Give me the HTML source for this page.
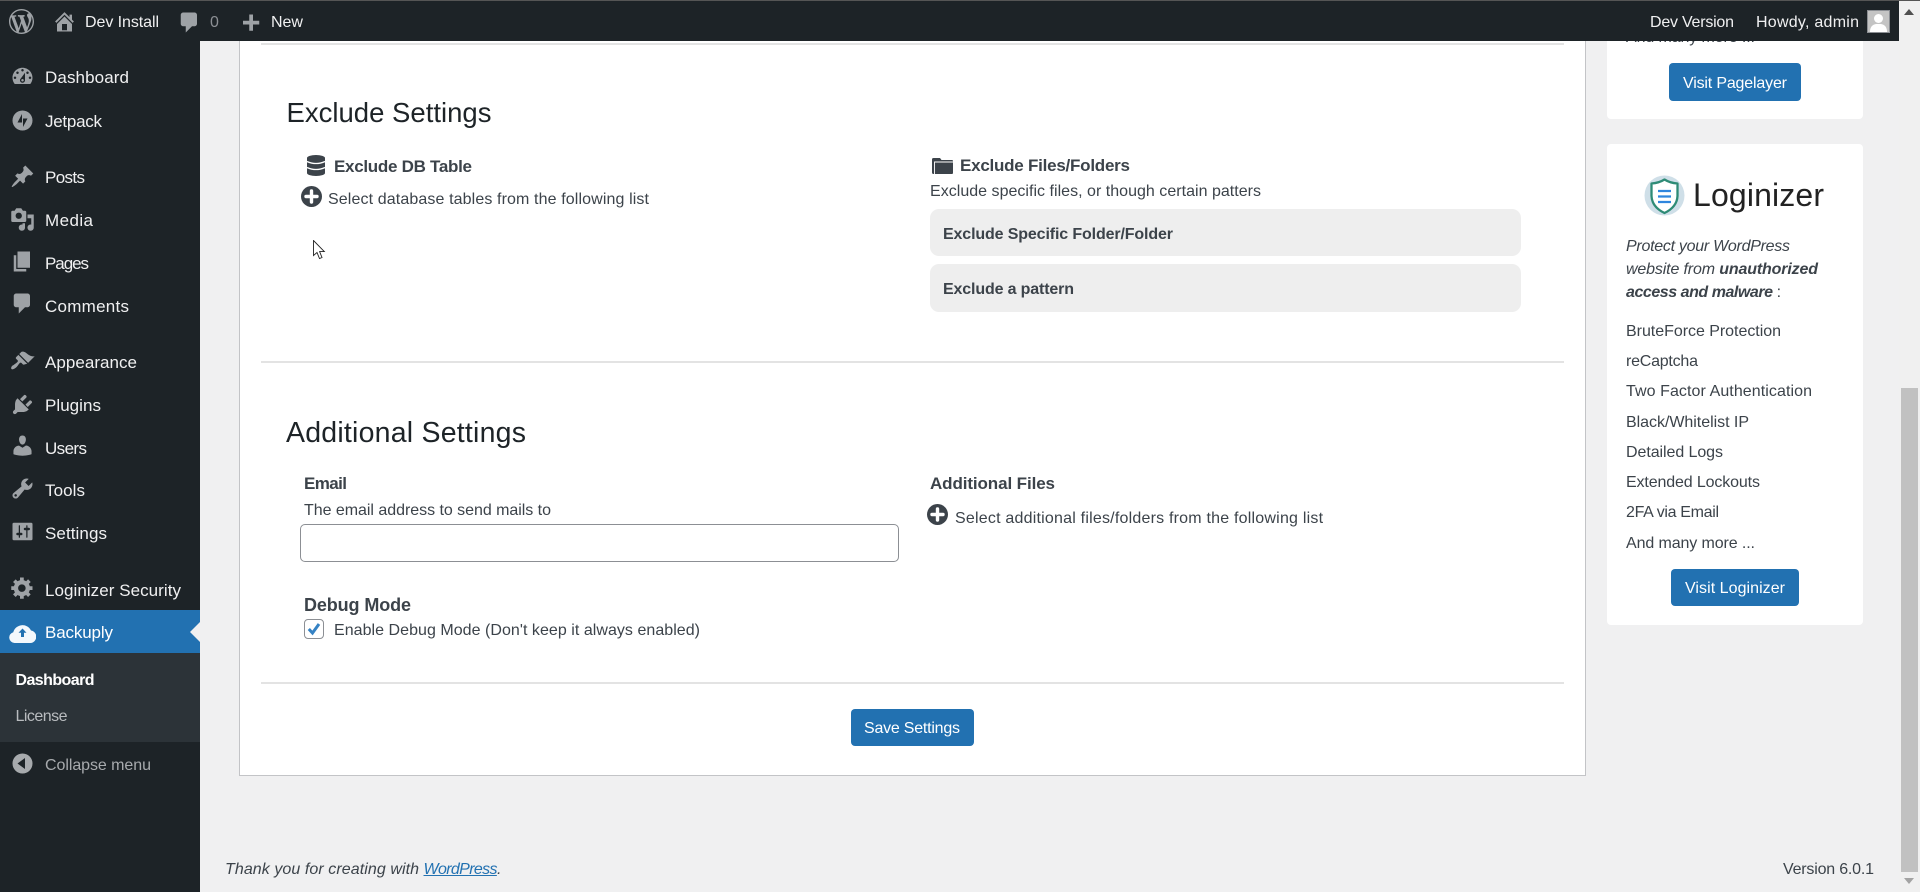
<!DOCTYPE html>
<html lang="en">
<head>
<meta charset="utf-8">
<title>Backuply Settings</title>
<style>
html,body{margin:0;padding:0;width:1920px;height:892px;overflow:hidden;background:#f0f0f1;font-family:"Liberation Sans",Arial,sans-serif;color:#3c434a}
.a{position:absolute}
.t{position:absolute;white-space:nowrap;line-height:20px;font-size:16px;top:calc(var(--b)*1px + var(--o,2px) - 10px - .3465em)}
.m{color:#f0f0f1;font-size:17px;--o:1px}
.h{font-size:27.5px;color:#1d2327;--o:0px}
.s{font-weight:700;font-size:17px;color:#3c434a;--o:0px}
.bar{color:#f0f0f1;font-size:16px;--o:1px}
.i{position:absolute;width:25px;height:25px;fill:#9ea2a6}
.btn{position:absolute;background:#2271b1;border-radius:4px;box-sizing:border-box}
.btxt{color:#fff;font-size:16px}
.hr{position:absolute;left:261px;width:1303px;height:2px;background:#e3e3e3}
.box{position:absolute;left:930px;width:591px;background:#eee;border-radius:9px}
a{color:#2271b1}
</style>
</head>
<body>
<!-- main card -->
<div class="a" style="left:239px;top:0;width:1347px;height:776px;background:#fff;border:1px solid #c3c4c7;box-sizing:border-box"></div>
<div class="hr" style="top:43px"></div>
<div class="hr" style="top:361px"></div>
<div class="hr" style="top:682px"></div>

<!-- Exclude settings -->
<h2 class="t h" style="margin:0;font-weight:400;left:286.500px;--b:123;--w:205">Exclude Settings</h2>
<svg class="a" style="left:307px;top:155px" width="18" height="21" viewBox="0 0 18 21"><path fill="#3c434a" d="M0 3a9 3 0 0 1 18 0v15a9 3 0 0 1-18 0z"/><path fill="none" stroke="#fff" stroke-width="1.3" d="M0 6.500q9 4 18 0M0 12.500q9 4 18 0"/></svg>
<span class="t s" style="left:334px;--b:172;--o:1px;--w:138">Exclude DB Table</span>
<svg class="a" style="left:301px;top:186px" width="21" height="21" viewBox="0 0 21 21"><circle cx="10.500" cy="10.500" r="10.500" fill="#3c434a"/><path stroke="#fff" stroke-width="3.400" stroke-linecap="round" d="M10.500 5v11M5 10.500h11"/></svg>
<span class="t" style="left:328px;--b:204;--w:321">Select database tables from the following list</span>
<svg class="a" style="left:313px;top:240px" width="13" height="20" viewBox="0 0 13 20"><path fill="#fff" stroke="#222" stroke-width=".9" d="M.5.5V15.500L4 12.500L6.500 18.500L9 17.500L6.600 11.600H11.300Z"/></svg>

<svg class="a" style="left:932px;top:158px" width="21" height="16" viewBox="0 0 21 16"><path fill="#3c434a" d="M0 1.500A1.500 1.500 0 0 1 1.500 0H8L9.500 2H20a1 1 0 0 1 1 1v12a1 1 0 0 1-1 1H1.500A1.500 1.500 0 0 1 0 14.500z"/><path fill="none" stroke="#fff" stroke-width=".9" d="M2.500 16V4H21"/></svg>
<span class="t s" style="left:960px;--b:172;--w:170">Exclude Files/Folders</span>
<span class="t" style="left:930px;--b:196;--w:331">Exclude specific files, or though certain patters</span>
<div class="box" style="top:209px;height:47px"></div>
<div class="box" style="top:264px;height:48px"></div>
<b class="t" style="left:943px;--b:239;--w:230;font-size:16px">Exclude Specific Folder/Folder</b>
<b class="t" style="left:943px;--b:294;--w:131;font-size:16px">Exclude a pattern</b>

<!-- Additional settings -->
<h2 class="t h" style="margin:0;font-weight:400;left:286px;--b:442;--o:1px;--w:240;font-size:28.500px">Additional Settings</h2>
<span class="t s" style="left:304px;--b:490;--w:43">Email</span>
<span class="t" style="left:304px;--b:515;--w:247">The email address to send mails to</span>
<input class="a" type="text" style="left:300px;top:524px;width:599px;height:38px;box-sizing:border-box;border:1px solid #8c8f94;border-radius:5px;background:#fff;padding:0;margin:0">
<span class="t s" style="left:304px;--b:611;--w:107;font-size:18px">Debug Mode</span>
<div class="a" style="left:304px;top:619px;width:20px;height:20px;box-sizing:border-box;border:1px solid #8c8f94;border-radius:4px;background:#fff"></div>
<svg class="a" style="left:304px;top:619px" width="20" height="20" viewBox="0 0 20 20"><path fill="none" stroke="#3582c4" stroke-width="3" d="M4.800 10l3.700 4 6.500-9"/></svg>
<span class="t" style="left:334px;--b:635;--w:366">Enable Debug Mode (Don't keep it always enabled)</span>

<span class="t s" style="left:930px;--b:490;--w:125">Additional Files</span>
<svg class="a" style="left:927px;top:504px" width="21" height="21" viewBox="0 0 21 21"><circle cx="10.500" cy="10.500" r="10.500" fill="#3c434a"/><path stroke="#fff" stroke-width="3.400" stroke-linecap="round" d="M10.500 5v11M5 10.500h11"/></svg>
<span class="t" style="left:955px;--b:523;--w:368">Select additional files/folders from the following list</span>

<a class="btn" style="left:851px;top:709px;width:123px;height:37px"></a>
<span class="t btxt" style="left:864px;--b:733;--w:96">Save Settings</span>

<!-- footer -->
<i class="t" style="left:225px;--b:875;--o:1px;--w:194">Thank you for creating with</i>
<i class="t" style="left:423.500px;--b:875;--o:1px;--w:74"><a href="#">WordPress</a></i>
<i class="t" style="left:497px;--b:875;--o:1px">.</i>
<span class="t" style="left:1783px;--b:875;--o:1px;--w:91">Version 6.0.1</span>

<!-- right cards -->
<div class="a" style="left:1607px;top:0;width:256px;height:119px;background:#fff;border-radius:4px"></div>
<span class="t" style="left:1626px;--b:42;--w:129">And many more ...</span>
<a class="btn" style="left:1669px;top:63px;width:132px;height:38px"></a>
<span class="t btxt" style="left:1683px;--b:88;--w:104">Visit Pagelayer</span>

<div class="a" style="left:1607px;top:144px;width:256px;height:481px;background:#fff;border-radius:4px"></div>
<svg class="a" style="left:1644px;top:175px" width="41" height="41" viewBox="0 0 41 41"><circle cx="20.500" cy="20.500" r="20" fill="#cfdfe8"/><path fill="#fff" stroke="#2e8b76" stroke-width="2.300" stroke-linejoin="round" d="M20.500 4.500Q26 8 33.500 8.500V21Q33 32 20.500 38Q8 32 7.500 21V8.500Q15 8 20.500 4.500Z"/><path stroke="#2f86de" stroke-width="2.200" d="M14 16h13M14 21.500h13M14 27h13"/></svg>
<span class="t" style="left:1693px;--b:205;--o:1px;--w:131;font-size:32px;color:#222">Loginizer</span>
<i class="t" style="left:1626px;--b:251;--w:164">Protect your WordPress</i>
<i class="t" style="left:1626px;--b:274;--w:192">website from <b>unauthorized</b></i>
<i class="t" style="left:1626px;--b:297;--w:155"><b>access and malware</b> <span style="font-style:normal">:</span></i>
<span class="t" style="left:1626px;--b:336;--w:155">BruteForce Protection</span>
<span class="t" style="left:1626px;--b:366;--w:72">reCaptcha</span>
<span class="t" style="left:1626px;--b:396;--w:186">Two Factor Authentication</span>
<span class="t" style="left:1626px;--b:427;--w:123">Black/Whitelist IP</span>
<span class="t" style="left:1626px;--b:457;--w:97">Detailed Logs</span>
<span class="t" style="left:1626px;--b:487;--w:134">Extended Lockouts</span>
<span class="t" style="left:1626px;--b:517;--w:93">2FA via Email</span>
<span class="t" style="left:1626px;--b:548;--w:129">And many more ...</span>
<a class="btn" style="left:1671px;top:569px;width:128px;height:37px"></a>
<span class="t btxt" style="left:1685px;--b:593;--w:100">Visit Loginizer</span>

<!-- scrollbar -->
<div class="a" style="left:1899px;top:0;width:21px;height:892px;background:#f0f0f0"></div>
<div class="a" style="left:1901px;top:388px;width:17px;height:484px;background:#c1c1c1"></div>
<svg class="a" style="left:1904px;top:9px" width="10" height="7"><path fill="#505050" d="M5 0l5 6H0z"/></svg>
<svg class="a" style="left:1904px;top:878px" width="10" height="7"><path fill="#a3a3a3" d="M0 0h10L5 6z"/></svg>

<!-- sidebar -->
<div class="a" style="left:0;top:0;width:200px;height:892px;background:#1d2327"></div>
<div class="a" style="left:0;top:610px;width:200px;height:43px;background:#2271b1"></div>
<div class="a" style="left:0;top:653px;width:200px;height:89px;background:#2c3338"></div>
<svg class="a" style="left:190px;top:622px" width="10" height="20"><path fill="#f0f0f1" d="M10 0v20L0 10z"/></svg>

<svg class="i" style="left:10px;top:64px" viewBox="0 0 20 20"><path d="M3.760 16h12.480c1.100-1.370 1.760-3.110 1.760-5 0-4.420-3.580-8-8-8s-8 3.580-8 8c0 1.890.66 3.630 1.760 5zM10 4c.55 0 1 .45 1 1s-.45 1-1 1-1-.45-1-1 .45-1 1-1zM6 6c.55 0 1 .45 1 1s-.45 1-1 1-1-.45-1-1 .45-1 1-1zm8 0c.55 0 1 .45 1 1s-.45 1-1 1-1-.45-1-1 .45-1 1-1zm-5.370 5.550L12 7v6c0 1.100-.9 2-2 2s-2-.9-2-2c0-.57.24-1.080.63-1.450zM4 10c.55 0 1 .45 1 1s-.45 1-1 1-1-.45-1-1 .45-1 1-1zm12 0c.55 0 1 .45 1 1s-.45 1-1 1-1-.45-1-1 .45-1 1-1zm-5 3c0-.55-.45-1-1-1s-1 .45-1 1 .45 1 1 1 1-.45 1-1z"/></svg>
<svg class="a" style="left:12px;top:110px;fill:#9ea2a6" width="21" height="21" viewBox="0 0 21 21"><path fill-rule="evenodd" d="M10.500.5a10 10 0 1 0 0 20 10 10 0 0 0 0-20zM10 4v8.500H5.500zM11 17V8.500h4.500z"/></svg>
<svg class="i" style="left:10px;top:164px" viewBox="0 0 20 20"><path d="M10.440 3.020l1.820-1.820 6.360 6.350-1.830 1.820c-1.050-.68-2.480-.57-3.410.36l-.75.75c-.92.93-1.040 2.350-.35 3.410l-1.830 1.820-2.410-2.410-2.800 2.790c-.42.42-3.380 2.710-3.800 2.290s1.860-3.390 2.280-3.810l2.790-2.790L4.100 9.360l1.830-1.820c1.050.69 2.480.57 3.400-.36l.75-.75c.93-.92 1.050-2.350.36-3.410z"/></svg>
<svg class="i" style="left:10px;top:207px" viewBox="0 0 20 20"><path fill-rule="evenodd" d="M13 11V4c0-.55-.45-1-1-1h-1.670L9 1H5L3.670 3H2c-.55 0-1 .45-1 1v7c0 .55.45 1 1 1h10c.55 0 1-.45 1-1zM7 4.500c1.380 0 2.500 1.120 2.500 2.500S8.380 9.500 7 9.500 4.500 8.380 4.500 7 5.620 4.500 7 4.500zM14 6h5v10.500c0 1.380-1.120 2.500-2.500 2.500S14 17.880 14 16.500s1.120-2.500 2.500-2.500c.17 0 .34.02.5.05V9h-3V6zm-4 8.050V13h2v3.500c0 1.380-1.120 2.500-2.500 2.500S7 17.880 7 16.500 8.120 14 9.500 14c.17 0 .34.02.5.05z"/></svg>
<svg class="i" style="left:10px;top:249px" viewBox="0 0 20 20"><path d="M6 15V2h10v13H6zm-1 1h8v2H3V5h2v11z"/></svg>
<svg class="i" style="left:10px;top:291px" viewBox="0 0 20 20"><path d="M5 2h9c1.100 0 2 .9 2 2v7c0 1.100-.9 2-2 2h-2l-5 5v-5H5c-1.100 0-2-.9-2-2V4c0-1.100.9-2 2-2z"/></svg>
<svg class="i" style="left:10px;top:349px" viewBox="0 0 20 20"><path d="M14.480 11.060L7.410 3.990l1.500-1.500c.5-.56 2.300-.47 3.510.32 1.210.8 1.430 1.280 2.910 2.100 1.180.64 2.450 1.260 4.450.85zm-.71.71L6.700 4.700 4.930 6.470c-.39.39-.39 1.020 0 1.410l1.060 1.060c.39.39.39 1.030 0 1.420-.6.6-1.430 1.110-2.210 1.690-.35.26-.7.53-1.010.84C1.430 13.230.4 15.190 1.190 16 2 16.780 3.950 15.750 5.290 14.410c.31-.31.58-.66.84-1.010.58-.78 1.090-1.610 1.690-2.210.39-.39 1.020-.39 1.410 0l1.060 1.060c.39.39 1.020.39 1.410 0z"/></svg>
<svg class="i" style="left:10px;top:392px" viewBox="0 0 20 20"><path d="M13.110 4.360L9.870 7.600 8 5.730l3.240-3.240c.35-.34 1.050-.2 1.560.32.52.51.66 1.210.31 1.550zm-8 1.770l.91-1.120 9.010 9.010-1.190.84c-.71.71-2.630 1.160-3.820 1.160H6.140L4.900 17.260c-.59.59-1.540.59-2.120 0-.59-.58-.59-1.530 0-2.120l1.240-1.240v-3.880c0-1.130.4-3.190 1.090-3.890zm7.260 3.970l3.240-3.240c.34-.35 1.040-.21 1.550.31.52.51.66 1.210.31 1.550l-3.240 3.250z"/></svg>
<svg class="i" style="left:10px;top:433px" viewBox="0 0 20 20"><path d="M10 9.250c-2.270 0-2.730-3.440-2.730-3.440C7 4.020 7.820 2 9.970 2c2.160 0 2.980 2.020 2.710 3.810 0 0-.41 3.440-2.680 3.440zm0 2.570L12.720 10c2.390 0 4.520 2.330 4.520 4.530v2.490s-3.650 1.130-7.240 1.130c-3.650 0-7.240-1.130-7.240-1.130v-2.490c0-2.250 1.940-4.480 4.470-4.480z"/></svg>
<svg class="i" style="left:10px;top:476px" viewBox="0 0 20 20"><path fill-rule="evenodd" d="M16.680 9.770c-1.340 1.340-3.300 1.670-4.950.99l-5.410 6.520c-.99.99-2.590.99-3.580 0s-.99-2.590 0-3.570l6.520-5.420c-.68-1.650-.35-3.610.99-4.950 1.280-1.280 3.120-1.620 4.720-1.060l-2.890 2.890 2.820 2.820 2.860-2.870c.53 1.580.18 3.390-1.080 4.650zM3.810 16.210c.4.39 1.040.39 1.430 0 .4-.4.4-1.040 0-1.430-.39-.4-1.030-.4-1.430 0-.39.39-.39 1.030 0 1.430z"/></svg>
<svg class="i" style="left:10px;top:519px" viewBox="0 0 20 20"><path fill-rule="evenodd" d="M18 16V4c0-.55-.45-1-1-1H3c-.55 0-1 .45-1 1v12c0 .55.45 1 1 1h14c.55 0 1-.45 1-1zM8 11h1c.55 0 1 .45 1 1s-.45 1-1 1H8v1.500c0 .28-.22.5-.5.5s-.5-.22-.5-.5V13H6c-.55 0-1-.45-1-1s.45-1 1-1h1V5.500c0-.28.22-.5.5-.5s.5.22.5.5V11zm5-2h-1c-.55 0-1-.45-1-1s.45-1 1-1h1V5.500c0-.28.22-.5.5-.5s.5.22.5.5V7h1c.55 0 1 .45 1 1s-.45 1-1 1h-1v5.500c0 .28-.22.5-.5.5s-.5-.22-.5-.5V9z"/></svg>
<svg class="i" style="left:10px;top:575px" viewBox="0 0 20 20"><path fill-rule="evenodd" d="M18 12h-2.180c-.17.7-.44 1.350-.81 1.930l1.540 1.540-2.100 2.100-1.540-1.540c-.58.36-1.230.63-1.910.79V19H8v-2.180c-.68-.16-1.330-.43-1.910-.79l-1.540 1.540-2.120-2.120 1.540-1.540c-.36-.58-.63-1.230-.79-1.910H1V9.030h2.170c.16-.7.44-1.350.8-1.940L2.430 5.550l2.100-2.100 1.540 1.540c.58-.37 1.240-.64 1.930-.81V2h3v2.180c.68.16 1.330.43 1.910.79l1.540-1.540 2.120 2.120-1.540 1.540c.36.59.64 1.240.8 1.940H18V12zm-8.500 1.500c1.660 0 3-1.340 3-3s-1.340-3-3-3-3 1.340-3 3 1.340 3 3 3z"/></svg>
<svg class="a" style="left:9px;top:622px" width="27" height="21" viewBox="0 0 27 21"><path fill="#f4f8fc" d="M5.500 21a5.500 5.500 0 0 1-1.200-10.800A9.500 9.500 0 0 1 22 8.500a6.300 6.300 0 0 1-.5 12.500z"/><path fill="#2271b1" d="M13.500 6.500l4 4.200h-2.500V15h-3v-4.300H9.500z"/></svg>
<svg class="a" style="left:12px;top:753px" width="21" height="21" viewBox="0 0 21 21"><path fill="#a7aaad" fill-rule="evenodd" d="M10.500.5a10 10 0 1 0 0 20 10 10 0 0 0 0-20zM13 16l-7.500-5.500L13 5z"/></svg>

<span class="t m" style="left:45px;--b:83;--w:84">Dashboard</span>
<span class="t m" style="left:45px;--b:127;--w:57">Jetpack</span>
<span class="t m" style="left:45px;--b:183;--w:40">Posts</span>
<span class="t m" style="left:45px;--b:226;--w:48">Media</span>
<span class="t m" style="left:45px;--b:269;--w:44">Pages</span>
<span class="t m" style="left:45px;--b:312;--w:84">Comments</span>
<span class="t m" style="left:45px;--b:368;--w:92">Appearance</span>
<span class="t m" style="left:45px;--b:411;--w:56">Plugins</span>
<span class="t m" style="left:45px;--b:454;--w:42">Users</span>
<span class="t m" style="left:45px;--b:496;--w:40">Tools</span>
<span class="t m" style="left:45px;--b:539;--w:62">Settings</span>
<span class="t m" style="left:45px;--b:596;--w:136">Loginizer Security</span>
<span class="t m" style="left:45px;--b:638;--w:68;color:#fff">Backuply</span>
<b class="t" style="left:15.500px;--b:685;--w:79;color:#fff">Dashboard</b>
<span class="t" style="left:15.500px;--b:721;--w:52;color:#b9bcbf">License</span>
<span class="t" style="left:45px;--b:770;--w:106;color:#a7aaad">Collapse menu</span>

<!-- admin bar -->
<div class="a" style="left:0;top:0;width:1899px;height:41px;background:#1d2327"></div>
<div class="a" style="left:0;top:0;width:1920px;height:1px;background:#555"></div>
<svg class="i" style="left:9px;top:9px" viewBox="0 0 20 20"><path fill-rule="evenodd" d="M20 10c0-5.510-4.490-10-10-10C4.480 0 0 4.490 0 10c0 5.520 4.480 10 10 10 5.510 0 10-4.480 10-10zM7.780 15.370L4.370 6.220c.55-.02 1.170-.08 1.170-.08.5-.06.44-1.130-.06-1.110 0 0-1.450.11-2.370.11-.18 0-.37 0-.58-.01C4.120 2.690 6.870 1.110 10 1.110c2.330 0 4.450.87 6.050 2.340-.68-.11-1.650.39-1.650 1.580 0 .74.45 1.360.9 2.100.35.61.55 1.360.55 2.460 0 1.490-1.400 5-1.400 5l-3.030-8.370c.54-.02.82-.17.82-.17.5-.05.44-1.250-.06-1.220 0 0-1.440.12-2.380.12-.87 0-2.330-.12-2.330-.12-.5-.03-.56 1.200-.06 1.220l.92.08 1.260 3.410zM17.410 10c.24-.64.74-1.870.43-4.250.7 1.290 1.050 2.710 1.050 4.250 0 3.290-1.730 6.240-4.400 7.780.97-2.590 1.940-5.200 2.920-7.780zM6.100 18.090C3.120 16.650 1.110 13.530 1.110 10c0-1.300.23-2.480.72-3.590C3.250 10.300 4.670 14.200 6.100 18.090zm4.030-6.630l2.580 6.980c-.86.29-1.760.45-2.710.45-.79 0-1.570-.11-2.290-.33.81-2.380 1.620-4.740 2.420-7.100z"/></svg>
<svg class="i" style="left:52px;top:9px" viewBox="0 0 20 20"><path fill-rule="evenodd" d="M16 8.500l1.530 1.530-1.060 1.060L10 4.620l-6.470 6.470-1.060-1.060L10 2.500l4 4v-2h2v4zm-6-2.460l6 5.990V18H4v-5.970zM12 17v-5H8v5h4z"/></svg>
<span class="t bar" style="left:85px;--b:28;--w:74">Dev Install</span>
<svg class="i" style="left:177px;top:9.500px" viewBox="0 0 20 20"><path d="M5 2h9c1.100 0 2 .9 2 2v7c0 1.100-.9 2-2 2h-2l-5 5v-5H5c-1.100 0-2-.9-2-2V4c0-1.100.9-2 2-2z"/></svg>
<span class="t" style="left:210px;--b:28;--o:1px;color:#8c8f94">0</span>
<svg class="i" style="left:238px;top:11.500px" viewBox="0 0 20 20"><path d="M17 7v3h-5v5H9v-5H4V7h5V2h3v5h5z"/></svg>
<span class="t bar" style="left:271px;--b:28;--w:32">New</span>
<span class="t bar" style="left:1650px;--b:28;--w:84">Dev Version</span>
<span class="t bar" style="left:1756px;--b:28;--w:103">Howdy, admin</span>
<svg class="a" style="left:1867px;top:10px" width="23" height="23" viewBox="0 0 23 23"><rect x=".5" y=".5" width="22" height="22" fill="#c4c4c4" stroke="#8c8f94"/><circle cx="11.500" cy="8.500" r="4.500" fill="#fff"/><path fill="#fff" d="M3 22q0-7 6-8h5q6 1 6 8z"/></svg>

<script>
document.querySelectorAll('.t').forEach(function(e){
  var w=parseFloat(getComputedStyle(e).getPropertyValue('--w'));
  if(!w)return;
  var n=e.textContent.length,c=e.getBoundingClientRect().width;
  if(n>1)e.style.letterSpacing=((w-c)/(n-1)).toFixed(3)+'px';
});
</script>
</body>
</html>
